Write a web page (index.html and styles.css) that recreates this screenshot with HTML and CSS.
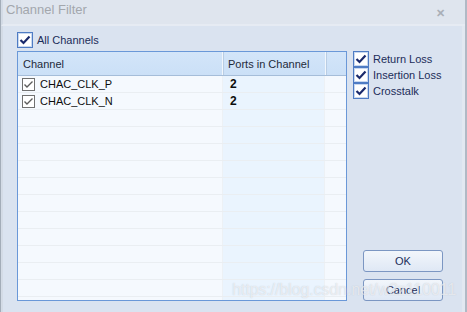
FILE: index.html
```html
<!DOCTYPE html>
<html>
  <head>
    <title>Channel Filter</title>
    <link rel="stylesheet" href="styles.css">
  </head>
  <body>
    <div class="window">
      <div class="titlebar">
        <span class="title">Channel Filter</span>
        <span class="close">&#x2715;</span>
      </div>
      <div class="content">
        <div class="left-pane">
          <label class="check-row">
            <span class="box"><svg width="12" height="10" viewBox="0 0 12 10"><path d="M1.5 5 L4.5 8 L10.5 1.5" fill="none" stroke="#1a2a6c" stroke-width="2.2"/></svg></span>
            All Channels
          </label>
          <div class="grid">
            <div class="grid-header">
              <div class="cell col-name">Channel</div>
              <div class="cell col-ports">Ports in Channel</div>
              <div class="cell col-rest"></div>
            </div>
            <div class="grid-body">
              <div class="grid-row">
                <div class="cell col-name">
                  <span class="row-box"><svg width="11" height="9" viewBox="0 0 11 9"><path d="M1.5 4.5 L4 7 L9.5 1.5" fill="none" stroke="#5c5c5c" stroke-width="1.4"/></svg></span>
                  CHAC_CLK_P
                </div>
                <div class="cell col-ports num">2</div>
                <div class="cell col-rest"></div>
              </div>
              <div class="grid-row">
                <div class="cell col-name">
                  <span class="row-box"><svg width="11" height="9" viewBox="0 0 11 9"><path d="M1.5 4.5 L4 7 L9.5 1.5" fill="none" stroke="#5c5c5c" stroke-width="1.4"/></svg></span>
                  CHAC_CLK_N
                </div>
                <div class="cell col-ports num">2</div>
                <div class="cell col-rest"></div>
              </div>
              <div class="grid-row"><div class="cell col-name"></div><div class="cell col-ports"></div><div class="cell col-rest"></div></div>
              <div class="grid-row"><div class="cell col-name"></div><div class="cell col-ports"></div><div class="cell col-rest"></div></div>
              <div class="grid-row"><div class="cell col-name"></div><div class="cell col-ports"></div><div class="cell col-rest"></div></div>
              <div class="grid-row"><div class="cell col-name"></div><div class="cell col-ports"></div><div class="cell col-rest"></div></div>
              <div class="grid-row"><div class="cell col-name"></div><div class="cell col-ports"></div><div class="cell col-rest"></div></div>
              <div class="grid-row"><div class="cell col-name"></div><div class="cell col-ports"></div><div class="cell col-rest"></div></div>
              <div class="grid-row"><div class="cell col-name"></div><div class="cell col-ports"></div><div class="cell col-rest"></div></div>
              <div class="grid-row"><div class="cell col-name"></div><div class="cell col-ports"></div><div class="cell col-rest"></div></div>
              <div class="grid-row"><div class="cell col-name"></div><div class="cell col-ports"></div><div class="cell col-rest"></div></div>
              <div class="grid-row"><div class="cell col-name"></div><div class="cell col-ports"></div><div class="cell col-rest"></div></div>
              <div class="grid-row"><div class="cell col-name"></div><div class="cell col-ports"></div><div class="cell col-rest"></div></div>
              <div class="grid-row"><div class="cell col-name"></div><div class="cell col-ports"></div><div class="cell col-rest"></div></div>
            </div>
          </div>
        </div>
        <div class="right-pane">
          <div class="options">
            <label class="check-row small">
              <span class="box"><svg width="12" height="10" viewBox="0 0 12 10"><path d="M1.5 5 L4.5 8 L10.5 1.5" fill="none" stroke="#1a2a6c" stroke-width="2.2"/></svg></span>
              Return Loss
            </label>
            <label class="check-row small">
              <span class="box"><svg width="12" height="10" viewBox="0 0 12 10"><path d="M1.5 5 L4.5 8 L10.5 1.5" fill="none" stroke="#1a2a6c" stroke-width="2.2"/></svg></span>
              Insertion Loss
            </label>
            <label class="check-row small">
              <span class="box"><svg width="12" height="10" viewBox="0 0 12 10"><path d="M1.5 5 L4.5 8 L10.5 1.5" fill="none" stroke="#1a2a6c" stroke-width="2.2"/></svg></span>
              Crosstalk
            </label>
          </div>
          <div class="buttons">
            <button class="btn">OK</button>
            <button class="btn">Cancel</button>
          </div>
        </div>
      </div>
      <div class="watermark">https://blog.csdn.net/w2z110011</div>
    </div>
  </body>
</html>
```

FILE: styles.css
```css
body {
  margin: 0;
  background-color: #dae3f0;
  font-family: "Liberation Sans", Arial, sans-serif;
  font-size: 11px;
  overflow: hidden;
}
.window {
  position: relative;
  width: 467px;
  height: 312px;
  box-sizing: border-box;
  border-left: 1px solid #a3adb9;
  border-right: 2px solid #b0b9c5;
  background-color: #dae3f0;
  display: flex;
  flex-direction: column;
}
.titlebar {
  height: 24px;
  flex-shrink: 0;
  display: flex;
  align-items: center;
  justify-content: space-between;
  background-color: #dfe5ee;
  border-bottom: 2px solid #e6ebf3;
  border-left: 2px solid #d3dbe6;
  padding: 0 20px 0 3px;
}
.title {
  color: #a3a7ad;
  font-size: 13px;
  margin-top: -5px;
}
.close {
  color: #a9afb7;
  font-size: 11px;
  font-weight: bold;
  margin-top: 2px;
}
.content {
  flex: 1;
  display: flex;
  gap: 6px;
  padding: 5px 0 11px 14px;
  border-left: 2px solid #d3dbe6;
  border-right: 3px solid #e2e8f1;
  min-height: 0;
}
.left-pane {
  display: flex;
  flex-direction: column;
  gap: 3px;
  width: 330px;
}
.check-row {
  display: flex;
  align-items: center;
  gap: 4px;
  color: #1c2d59;
  height: 17px;
}
.check-row .box {
  width: 14px;
  height: 14px;
  border: 1px solid #4f7cc4;
  box-shadow: inset 0 0 0 1px #c9d9f0;
  background-color: #fff;
  display: flex;
  align-items: center;
  justify-content: center;
}
.check-row.small {
  height: 16px;
}
.grid {
  flex: 1;
  border: 1px solid #6a98d8;
  display: flex;
  flex-direction: column;
  overflow: hidden;
  background-color: #f5f9fe;
}
.grid-header {
  height: 23px;
  flex-shrink: 0;
  display: flex;
  background: linear-gradient(#d3e5f9, #cbe0f7);
  border-bottom: 1px solid #a5bdd9;
  color: #1e2a3a;
}
.grid-header .cell {
  display: flex;
  align-items: center;
  padding-left: 5px;
}
.grid-header .col-ports,
.grid-header .col-rest {
  border-left: 1px solid #f1f6fc;
  box-shadow: inset 1px 0 0 #b9cde4;
}
.grid-body {
  flex: 1;
  overflow: hidden;
}
.grid-row {
  height: 16px;
  display: flex;
  border-bottom: 1px solid #eaeef2;
  color: #0d0d0d;
}
.cell {
  box-sizing: border-box;
}
.col-name {
  width: 204px;
}
.col-ports {
  width: 103px;
}
.col-rest {
  flex: 1;
}
.grid-row .cell {
  display: flex;
  align-items: center;
}
.grid-row .col-name {
  padding-left: 4px;
  gap: 5px;
}
.grid-row .col-ports {
  background-color: #eaf4fe;
  border-left: 1px solid #edf1f5;
  border-right: 1px solid #edf1f5;
  padding-left: 7px;
}
.num {
  font-weight: bold;
  font-size: 12px;
}
.row-box {
  width: 11px;
  height: 11px;
  border: 1px solid #707070;
  background-color: #fff;
  display: flex;
  align-items: center;
  justify-content: center;
}
.right-pane {
  flex: 1;
  display: flex;
  flex-direction: column;
  justify-content: space-between;
  padding-top: 20px;
}
.options {
  display: flex;
  flex-direction: column;
  gap: 0;
}
.buttons {
  display: flex;
  flex-direction: column;
  gap: 7px;
  padding-left: 10px;
}
.btn {
  width: 80px;
  height: 22px;
  border: 1px solid #7b96c2;
  border-radius: 3px;
  background: linear-gradient(#f2f6fb, #dfe8f5);
  color: #1c2d59;
  font-family: "Liberation Sans", Arial, sans-serif;
  font-size: 11px;
  padding: 0;
}
.watermark {
  position: absolute;
  left: 231px;
  top: 281px;
  font-size: 16px;
  letter-spacing: -0.1px;
  color: rgba(255, 255, 255, 0.6);
  text-shadow: 0 0 1px rgba(150, 160, 175, 0.5);
  pointer-events: none;
}
```
